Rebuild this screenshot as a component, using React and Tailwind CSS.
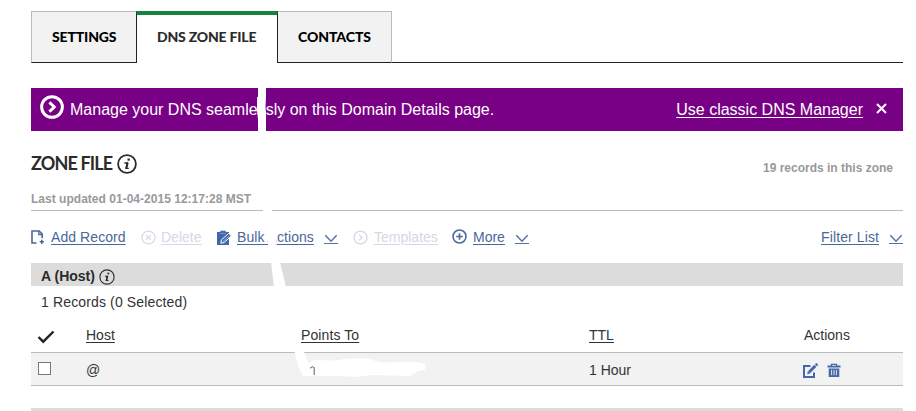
import React from "react";

const Info = ({ size, width, className = "" }) => (
  <svg width={size} height={size} viewBox="0 0 20 20" className={"shrink-0 " + className} fill="none" stroke="currentColor">
    <circle cx="10" cy="10" r="8.9" strokeWidth={width} />
    <path d="M7.4 9h2.9L9 14.3h2.8" strokeWidth="1.3" />
    <path d="M10.7 8.6L9.3 14.5" strokeWidth="2" />
    <path d="M10.5 5.6h2.3" strokeWidth="2.1" />
  </svg>
);

const CircleIcon = ({ size, width, className = "", children }) => (
  <svg width={size} height={size} viewBox="0 0 16 16" className={"shrink-0 " + className} fill="none" stroke="currentColor" strokeWidth={width}>
    <circle cx="8" cy="8" r="6.9" />
    {children}
  </svg>
);

const Chevron = ({ className = "" }) => (
  <svg width="14" height="11" viewBox="0 0 14 11" className={"shrink-0 text-[#57739f] " + className} fill="none" stroke="currentColor">
    <path d="M1.3 1.3L7 7.2l5.7-5.9" strokeWidth="1.5" />
    <path d="M0 9.5h14" strokeWidth="1" />
  </svg>
);

const AddPage = () => (
  <svg width="14" height="15" viewBox="0 0 14 15" className="mt-px shrink-0" fill="none" stroke="currentColor">
    <path d="M5.5 13H1V1h7.2l3 3v4.2" strokeWidth="1.6" />
    <path d="M7.8 1v3.5h3.5" strokeWidth="1.3" />
    <path d="M8.7 11.8h4.2M10.8 9.7v4.2" strokeWidth="1.6" />
  </svg>
);

const Clipboard = () => (
  <svg width="15" height="16" viewBox="0 0 15 16" className="mt-px shrink-0">
    <path d="M0 2h3.3V.8h5.4V2H12v13H0z" fill="#4169aa" />
    <path d="M3.3 3.4h5.4" stroke="#8fa8cf" strokeWidth=".8" />
    <path d="M3.8 13.2l.7-3.4 7.2-6.5 2.7 2.7-7.3 6.5z" fill="#4169aa" stroke="#fff" strokeWidth="1" />
    <path d="M6 11.5l6.3-5.7" stroke="#dce5f3" strokeWidth=".6" />
  </svg>
);

const Edit = () => (
  <svg width="17" height="16" viewBox="0 0 17 16" className="-ml-px shrink-0" fill="none" stroke="#4169aa">
    <path d="M8.5 3H2v11h10V9.5" strokeWidth="2" />
    <path d="M7 9.2l6.4-6.4" strokeWidth="3" />
    <path d="M14 2.2l1.3-1.3" strokeWidth="3" />
    <path d="M5.2 11.2l.6-3 2.4 2.4z" fill="#4169aa" stroke="none" />
  </svg>
);

const Trash = () => (
  <svg width="14" height="15" viewBox="0 0 14 15" className="shrink-0" fill="#4169aa">
    <path fillRule="evenodd" d="M3.8.8h6.4v1.7h3.3v2H.5v-2h3.3zM5 1.9v.8h4v-.8z" />
    <path d="M1.7 5.5h10.6V14H1.7z" />
    <path d="M4.6 6.8v5.4M7 6.8v5.4M9.4 6.8v5.4" stroke="#f2f2f2" strokeWidth=".9" />
  </svg>
);

const link = "underline underline-offset-2 decoration-1 whitespace-nowrap shrink-0";

export default function App() {
  return (
    <div className="relative h-[411px] w-[916px] overflow-hidden bg-white pl-[31px] pt-[11px] font-['Liberation_Sans',Arial,sans-serif] text-[14px] leading-5 text-[#333]">
      <div className="w-[872px]">
        <nav className="flex h-[52px] font-[Lato,sans-serif] text-[14px] font-black leading-[50px] text-black">
          <div className="w-[105px] border border-r-0 border-[#bbb] border-b-[#222] bg-[#f2f2f2] pl-5">
            <span className="inline-block whitespace-nowrap tracking-[-0.15px]">SETTINGS</span>
          </div>
          <div className="w-[142px] border-x border-t-4 border-x-[#222] border-t-[#15823f] pl-5 leading-[44px] text-[#2b2b2b]">
            <span className="inline-block whitespace-nowrap tracking-[-0.2px]">DNS ZONE FILE</span>
          </div>
          <div className="w-[114px] border border-l-0 border-[#bbb] border-b-[#222] bg-[#f2f2f2] pl-5">
            <span className="inline-block whitespace-nowrap tracking-[-0.08px]">CONTACTS</span>
          </div>
          <div className="flex-1 border-b border-[#222]" />
        </nav>

        <section className="mt-[25px] flex h-[43px] items-center bg-[#780085] pl-[9px] text-[16px] text-white">
          <CircleIcon size={24} width={2} className="-mt-1.5">
            <path d="M6.3 4.9L9.5 8l-3.2 3.1" />
          </CircleIcon>
          <span className="ml-[6px] whitespace-nowrap">Manage your DNS seamlessly on this Domain Details page.</span>
          <span className={link + " ml-auto"}>Use classic DNS Manager</span>
          <svg width="11" height="11" viewBox="0 0 11 11" className="ml-[13px] mr-[16px] -mt-0.5 shrink-0" stroke="white" strokeWidth="2">
            <path d="M1 1l9 9M10 1L1 10" />
          </svg>
        </section>

        <header className="flex h-[80px] flex-col border-b border-[#bbb]">
          <div className="mt-[21px] flex h-[22px] items-center">
            <h1 className="w-[86px] whitespace-nowrap font-[Lato,sans-serif] text-[18px] font-bold tracking-[-0.85px] text-[#2b2b2b]">ZONE FILE</h1>
            <Info size={20} width={1.8} className="mt-0.5 text-[#2b2b2b]" />
            <span className="ml-auto mr-[10px] mt-2.5 text-[12px] font-bold text-[#999]">19 records in this zone</span>
          </div>
          <p className="mt-[15px] text-[12px] font-bold tracking-[0.02px] text-[#999]">Last updated 01-04-2015 12:17:28 MST</p>
        </header>

        <div className="mt-[16px] flex h-5 items-center text-[#4a6899]">
          <AddPage />
          <span className={link + " ml-1.5 w-[90px]"}><span className="tracking-[0.08px]">Add Record</span></span>
          <CircleIcon size={15} width={1.3} className="text-[#d3d9e5]"><path d="M5.5 5.5l5 5M10.5 5.5l-5 5" /></CircleIcon>
          <span className={link + " ml-[5px] w-[56px] text-[#d3d9e5]"}>Delete</span>
          <Clipboard />
          <span className={link + " ml-[5px] w-[87px] tracking-[0.05px]"}>Bulk Actions</span>
          <Chevron className="mt-1" />
          <CircleIcon size={15} width={1.4} className="ml-[15px] text-[#d3d9e5]"><path d="M6.5 5L9.7 8l-3.2 3" /></CircleIcon>
          <span className={link + " ml-[6px] w-[78px] text-[#d3d9e5]"}>Templates</span>
          <CircleIcon size={15} width={1.7} className="mt-[-1px]"><path d="M4.5 8h7M8 4.5v7" /></CircleIcon>
          <span className={link + " ml-[6px] w-[42px]"}>More</span>
          <Chevron className="mt-1" />
          <span className={link + " ml-auto tracking-[0.1px]"}>Filter List</span>
          <Chevron className="ml-[10px] mt-1" />
        </div>

        <div className="mt-4 flex h-[23px] items-center bg-[#dcdcdc] pl-[10px] pt-[3px] font-bold text-[#2b2b2b]">
          <span className="w-[58px] whitespace-nowrap">A (Host)</span>
          <Info size={16} width={1.4} className="mt-px" />
        </div>
        <p className="mt-[6px] h-5 pl-[10px] tracking-[0.14px]">1 Records (0 Selected)</p>

        <div className="mt-[13px] flex h-[28px] border-b border-[#bbb]">
          <div className="w-[55px] pl-[6px] pt-[5px]">
            <svg width="18" height="14" viewBox="0 0 18 14" fill="none" stroke="#222" strokeWidth="2.4"><path d="M1.5 7l4.7 4.7L16.5 1.5" /></svg>
          </div>
          <div className={link + " w-[215px]"}>Host</div>
          <div className={link + " w-[288px]"}><span className="tracking-[0.1px]">Points To</span></div>
          <div className={link + " w-[215px]"}>TTL</div>
          <div>Actions</div>
        </div>
        <div className="flex h-[33px] border-b border-[#bbb] bg-[#f2f2f2] pt-[7px]">
          <div className="w-[55px] pl-[7px] pt-[2px]"><div className="h-[13px] w-[13px] border border-[#777] bg-white" /></div>
          <div className="w-[503px]">@</div>
          <div className="w-[214px]">1 Hour</div>
          <div className="flex gap-[8px] pt-[3px]"><Edit /><Trash /></div>
        </div>
        <div className="mt-[22px] h-[3px] bg-[#dcdcdc]" />
      </div>

      <svg width="190" height="300" viewBox="250 85 190 300" className="absolute left-[250px] top-[85px]" fill="#fff">
        <path d="M258 87h8v8l-.5 13 .5 4v20h-8v-13l-1-8v-14h1z" />
        <path d="M263 208h9v5h-9zM268 228h8.6v18H268z" />
        <path d="M271 262h9l6 25h-12z" />
        <path d="M294.5 352h9.5l4.5 11.5 5-3.5 22 .5 13-2 20 0 11 4 36-.5 10 2-.5 6-7 1-8 5-38-1-15 2-20-1H303l-5-10z" />
        <path d="M310 368.3l2.2-1.6 2 .8v7.5" fill="none" stroke="#4d6273" strokeWidth="1" />
      </svg>
    </div>
  );
}
